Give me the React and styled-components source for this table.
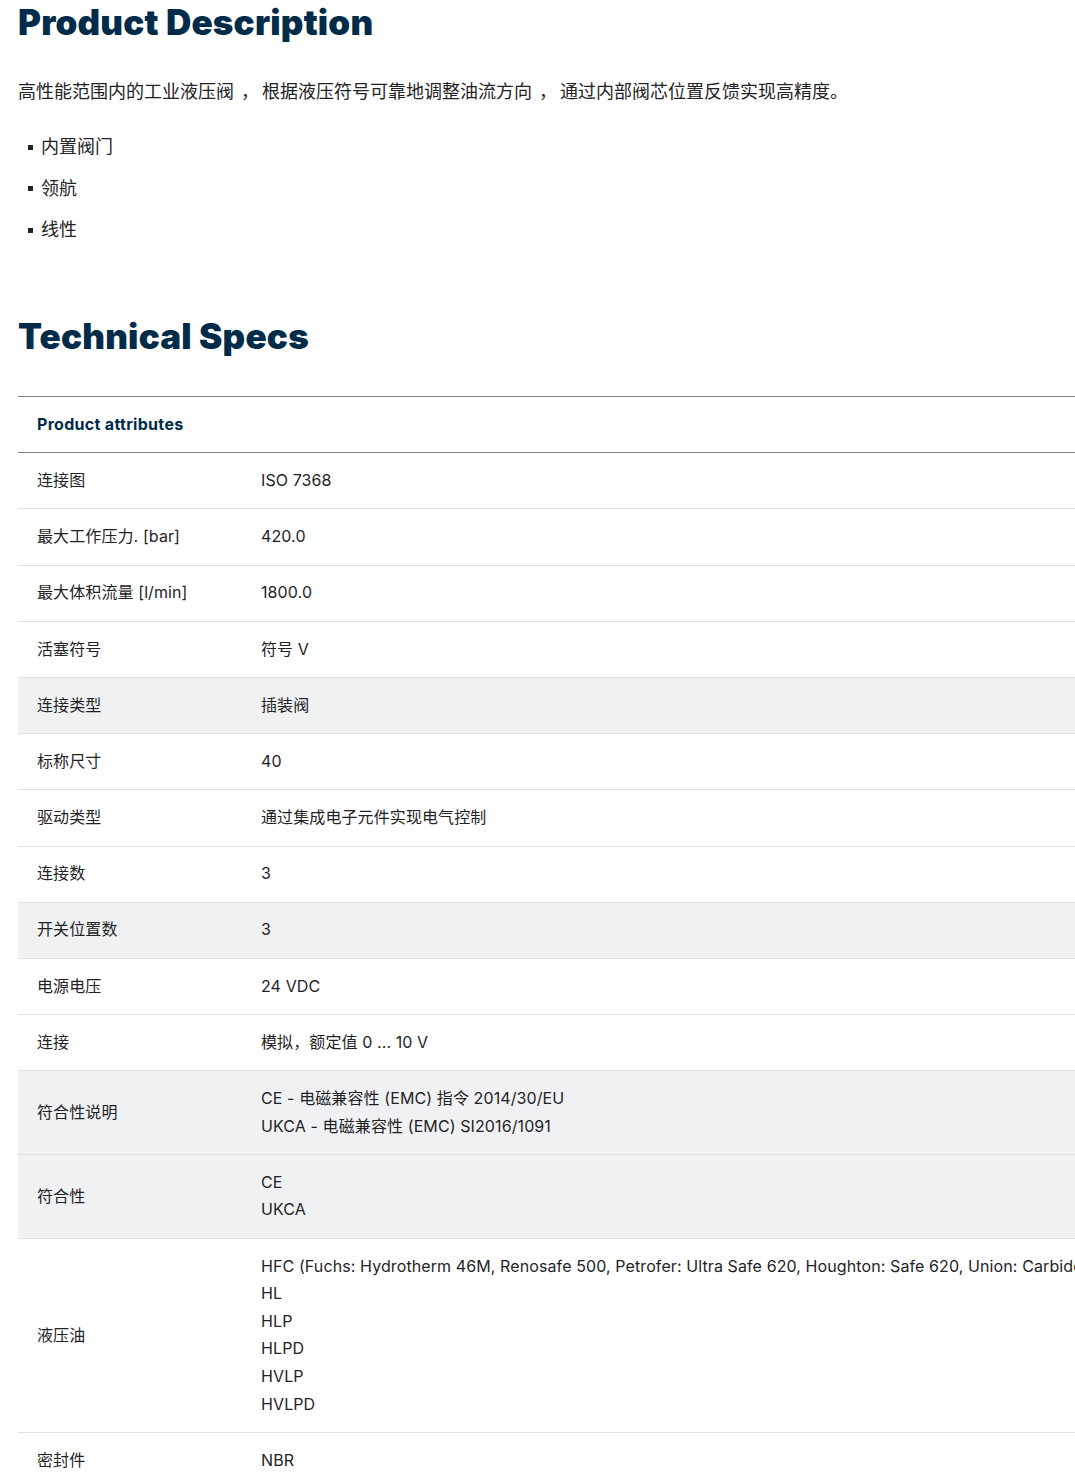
import React from 'react';
import styled, { createGlobalStyle } from 'styled-components';

const GlobalStyle = createGlobalStyle`
  html, body {
    margin: 0;
    padding: 0;
    overflow-x: hidden;
    background: #ffffff;
  }
  body {
    font-family: Inter, "Noto Sans CJK SC", sans-serif;
    color: #1f2326;
  }
`;

const Page = styled.div`
  padding: 0 0 0 18px;
`;

const Heading = styled.h2`
  font-family: Inter, "Noto Sans CJK SC", sans-serif;
  font-weight: 900;
  font-size: 35px;
  line-height: 44px;
  color: #002b49;
  margin: ${({ $top }) => $top} 0 0;
  letter-spacing: 0.2px;
`;

const Intro = styled.p`
  font-size: 18px;
  line-height: 28px;
  margin: 34px 0 0;
`;

const Comma = styled.span`
  margin: 0 3px 0 7px;
`;

const BulletList = styled.ul`
  list-style: none;
  margin: 27px 0 0;
  padding: 0 0 0 10px;
  display: flex;
  flex-direction: column;
  gap: 13.5px;
`;

const Bullet = styled.li`
  display: flex;
  align-items: center;
  font-size: 18px;
  line-height: 28px;

  &::before {
    content: '';
    width: 5px;
    height: 5px;
    background: #1f2326;
    margin-right: 8px;
    flex: none;
  }
`;

const SpecTable = styled.div`
  width: 1240px;
  margin-top: 38px;
  border-top: 1px solid #7d878f;
`;

const Row = styled.div`
  display: grid;
  grid-template-columns: 224px 1fr;
  border-bottom: 1px solid ${({ $strong }) => ($strong ? '#7d878f' : '#dfe2e5')};
  background: ${({ $shaded }) => ($shaded ? '#eff1f2' : '#ffffff')};
  align-items: center;
`;

const Cell = styled.div`
  padding: 13.8px 19px;
  font-size: 16px;
  line-height: 27.6px;
  white-space: nowrap;
  letter-spacing: 0.1px;
`;

const HeadCell = styled(Cell)`
  font-weight: 700;
  color: #002b49;
  font-size: 16px;
  letter-spacing: 0.3px;
`;

const ValueLine = styled.div`
  white-space: nowrap;
`;

const specs = [
  { label: '连接图', values: ['ISO 7368'] },
  { label: '最大工作压力. [bar]', values: ['420.0'] },
  { label: '最大体积流量 [l/min]', values: ['1800.0'] },
  { label: '活塞符号', values: ['符号 V'] },
  { label: '连接类型', values: ['插装阀'], shaded: true },
  { label: '标称尺寸', values: ['40'] },
  { label: '驱动类型', values: ['通过集成电子元件实现电气控制'] },
  { label: '连接数', values: ['3'] },
  { label: '开关位置数', values: ['3'], shaded: true },
  { label: '电源电压', values: ['24 VDC'] },
  { label: '连接', values: ['模拟，额定值 0 ... 10 V'] },
  {
    label: '符合性说明',
    values: ['CE - 电磁兼容性 (EMC) 指令 2014/30/EU', 'UKCA - 电磁兼容性 (EMC) SI2016/1091'],
    shaded: true,
  },
  { label: '符合性', values: ['CE', 'UKCA'], shaded: true },
  {
    label: '液压油',
    values: [
      'HFC (Fuchs: Hydrotherm 46M, Renosafe 500, Petrofer: Ultra Safe 620, Houghton: Safe 620, Union: Carbide HP5046)',
      'HL',
      'HLP',
      'HLPD',
      'HVLP',
      'HVLPD',
    ],
  },
  { label: '密封件', values: ['NBR'] },
];

const App = () => {
  return (
    <Page>
      <GlobalStyle />
      <Heading $top="0px">Product Description</Heading>
      <Intro>
        高性能范围内的工业液压阀<Comma>，</Comma>根据液压符号可靠地调整油流方向<Comma>，</Comma>通过内部阀芯位置反馈实现高精度。
      </Intro>
      <BulletList>
        <Bullet>内置阀门</Bullet>
        <Bullet>领航</Bullet>
        <Bullet>线性</Bullet>
      </BulletList>
      <Heading $top="70px">Technical Specs</Heading>
      <SpecTable>
        <Row $strong>
          <HeadCell>Product attributes</HeadCell>
          <div />
        </Row>
        {specs.map((s) => (
          <Row key={s.label} $shaded={s.shaded}>
            <Cell>{s.label}</Cell>
            <Cell>
              {s.values.map((v) => (
                <ValueLine key={v}>{v}</ValueLine>
              ))}
            </Cell>
          </Row>
        ))}
      </SpecTable>
    </Page>
  );
};

export default App;
